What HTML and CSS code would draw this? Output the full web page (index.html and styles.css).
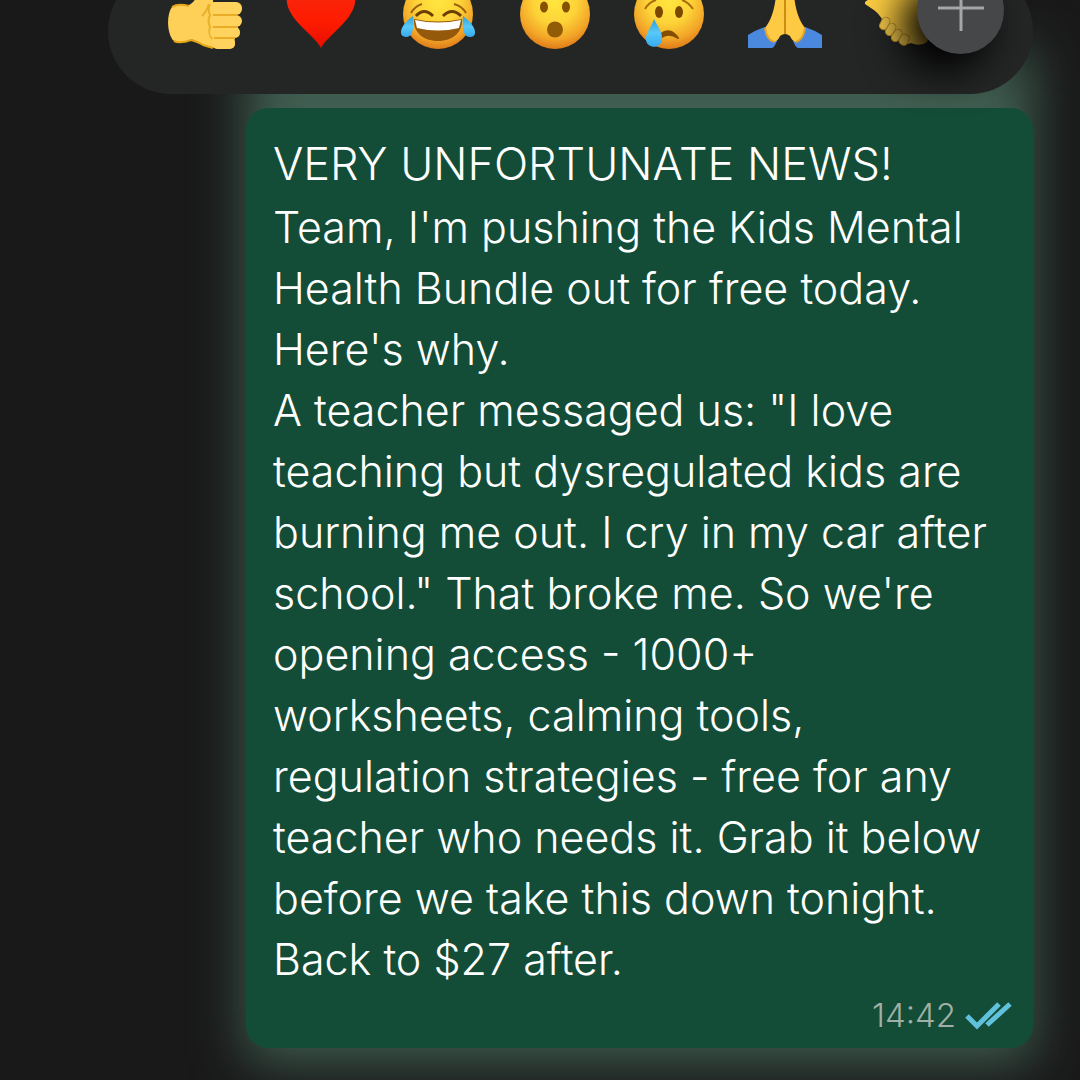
FILE: index.html
```html
<!DOCTYPE html>
<html lang="en">
<head>
<meta charset="utf-8">
<meta name="viewport" content="width=device-width, initial-scale=1">
<title>Message reactions</title>
<link rel="stylesheet" href="styles.css">
</head>
<body>
<svg class="defs" width="0" height="0" aria-hidden="true">
  <defs>
    <radialGradient id="face" cx="0.5" cy="0.32" r="0.7">
      <stop offset="0" stop-color="#ffe63e"/>
      <stop offset="0.45" stop-color="#fdd338"/>
      <stop offset="0.78" stop-color="#f2a427"/>
      <stop offset="1" stop-color="#dc7618"/>
    </radialGradient>
    <linearGradient id="tear" x1="0" y1="0" x2="0" y2="1">
      <stop offset="0" stop-color="#2f9fd8"/>
      <stop offset="0.5" stop-color="#58c9f8"/>
      <stop offset="1" stop-color="#36aaf0"/>
    </linearGradient>
    <linearGradient id="heart" x1="0" y1="0" x2="0" y2="1">
      <stop offset="0" stop-color="#f32a12"/>
      <stop offset="0.6" stop-color="#ff1c00"/>
      <stop offset="1" stop-color="#e60f00"/>
    </linearGradient>
  </defs>
</svg>
<main class="chat">
  <div class="reactions" role="group" aria-label="Reactions">
    <button class="reaction" type="button" aria-label="Thumbs up">
      <svg viewBox="0 0 76 76">
        <path d="M5 34C9 30 18 33 22 32C29 28 31 22 33 12C35 2 46 2 47 11C48 18 46 23 46 29L65 30L68 72C57 78 42 74 35 71C29 69 27 66 24 67C17 68 11 71 7 68C0 62-1 42 5 34Z" fill="#ffd058"/>
        <path d="M5 34Q11 30 22 33M7 68Q13 71 24 67Q29 68 36 72L46 75" fill="none" stroke="#e6a717" stroke-width="2"/>
        <path d="M42 31Q40 38 35 43M44 32Q40 36 43 42Q40 48 43 54Q41 60 45 66" fill="none" stroke="#e9b02c" stroke-width="2"/>
        <rect x="43" y="29" width="32" height="13" rx="6" fill="#ffd35d"/>
        <rect x="43" y="42" width="32" height="12" rx="6" fill="#ffd35d"/>
        <rect x="43" y="54" width="30" height="11" rx="5" fill="#ffd35d"/>
        <rect x="45" y="65" width="23" height="11" rx="5" fill="#ffd35d"/>
        <path d="M46 42H70M46 54H71M47 65H68" stroke="#e9ad27" stroke-width="2"/>
      </svg>
    </button>
    <button class="reaction" type="button" aria-label="Red heart">
      <svg viewBox="0 0 76 76">
        <path d="M38 75C35 69 28 63 19 54C8 43 2 33 4 21C7 5 29 2 38 18C47 2 69 5 72 21C74 33 68 43 57 54C48 63 41 69 38 75Z" fill="url(#heart)"/>
      </svg>
    </button>
    <button class="reaction" type="button" aria-label="Tears of joy">
      <svg viewBox="0 0 76 76">
        <circle cx="39" cy="41" r="35" fill="url(#face)"/>
        <path d="M12 40Q16 33 23 31M55 31Q63 33 67 40" fill="none" stroke="#98600b" stroke-width="2"/>
        <path d="M17 43Q25 34 34 43M44 43Q53 34 62 43" fill="none" stroke="#6b3e04" stroke-width="3"/>
        <path d="M15 46Q39 51 63 46C64 59 54 68 39 68C24 68 14 59 15 46Z" fill="#94590a"/>
        <path d="M16 47Q39 52 62 47L60 55Q39 60 18 55Z" fill="#fff"/>
        <path d="M14 43C15 54 14 64 7 64C-1 64 0 53 14 43ZM64 43C63 54 64 64 71 64C79 64 78 53 64 43Z" fill="url(#tear)"/>
      </svg>
    </button>
    <button class="reaction" type="button" aria-label="Surprised">
      <svg viewBox="0 0 76 76">
        <circle cx="40" cy="41" r="35" fill="url(#face)"/>
        <ellipse cx="29" cy="34" rx="4" ry="5.5" fill="#875200"/>
        <ellipse cx="51" cy="34" rx="4" ry="5.5" fill="#875200"/>
        <circle cx="40" cy="56.500" r="8" fill="#925b05"/>
      </svg>
    </button>
    <button class="reaction" type="button" aria-label="Crying">
      <svg viewBox="0 0 76 76">
        <circle cx="38" cy="41" r="35" fill="url(#face)"/>
        <path d="M14 36Q18 29 25 27M51 27Q57 29 62 36" fill="none" stroke="#a66c0e" stroke-width="2"/>
        <ellipse cx="28" cy="39" rx="4" ry="6" fill="#7c4800"/>
        <ellipse cx="48" cy="39" rx="4" ry="6" fill="#7c4800"/>
        <path d="M30 61Q39 54 47 65Q38 59 31 64Z" fill="#844e02" stroke="#844e02" stroke-width="2" stroke-linejoin="round"/>
        <path d="M23 46C27 54 32 60 31 67C30 76 16 76 15 67C14 61 20 55 23 46Z" fill="url(#tear)"/>
      </svg>
    </button>
    <button class="reaction" type="button" aria-label="Folded hands">
      <svg viewBox="0 0 76 76">
        <path d="M1 62Q9 57 18 54L30 68Q27 75 25 75H1ZM75 62Q67 57 58 54L46 68Q49 75 51 75H75Z" fill="#4b89df"/>
        <path d="M18 55C24 47 27 39 29 23Q31 7 38 1Q45 7 47 23C49 39 52 47 58 55Q57 67 49 69Q45 68 43 63Q38 59 33 63Q31 68 27 69Q19 67 18 55Z" fill="#ffca43"/>
        <path d="M38 5V61" stroke="#cf8c12" stroke-width="2"/>
        <path d="M18 55Q20 67 27 69M58 55Q56 67 49 69" fill="none" stroke="#e7a325" stroke-width="2"/>
      </svg>
    </button>
    <button class="reaction" type="button" aria-label="Handshake">
      <svg viewBox="0 0 76 76">
        <path d="M2 29L22 14L57 18L75 35L64 69Q57 74 48 70Q41 73 38 68Q31 67 30 61Q25 61 24 56Q17 53 19 46C14 38 8 35 2 31Z" fill="#ffcf42"/>
        <g fill="#fad04d" stroke="#c9932a" stroke-width="1">
          <rect x="18" y="44" width="8" height="13" rx="4" transform="rotate(28 22 50)"/>
          <rect x="24" y="50" width="8" height="13" rx="4" transform="rotate(30 28 56)"/>
          <rect x="30" y="56" width="8" height="13" rx="4" transform="rotate(34 34 62)"/>
          <rect x="37" y="61" width="9" height="11" rx="4" transform="rotate(28 41 66)"/>
        </g>
      </svg>
    </button>
    <button class="more" type="button" aria-label="More reactions">
      <svg viewBox="0 0 46 46"><path d="M0 23H46M23 0V46" stroke="#a6a6a8" stroke-width="3"/></svg>
    </button>
  </div>
  <article class="message">
    <h1 class="headline">VERY UNFORTUNATE NEWS!</h1>
    <p class="text">Team, I'm pushing the Kids Mental Health Bundle out for free today. Here's why.</p>
    <p class="text">A teacher messaged us: "I love teaching but dysregulated kids are burning me out. I cry in my car after school." That broke me. So we're opening access - 1000+ worksheets, calming tools, regulation strategies - free for any teacher who needs it. Grab it below before we take this down tonight. Back to $27 after.</p>
    <footer class="status">
      <time datetime="14:42">14:42</time>
      <svg class="read" viewBox="0 0 48 30" role="img" aria-label="Read"><path d="M3 16L13 26L35 4M23 25L46 4" fill="none" stroke="#5fc1dc" stroke-width="5"/></svg>
    </footer>
  </article>
</main>
</body>
</html>
```
FILE: styles.css
```css
* {
  box-sizing: border-box;
}

body {
  margin: 0;
  min-height: 100vh;
  overflow-x: hidden;
  background: #191919;
  color: #fff;
  font-family: Inter, "Liberation Sans", sans-serif;
  font-weight: 300;
}

.defs {
  position: absolute;
}

.chat {
  display: flex;
  flex-direction: column;
  gap: 14px;
  padding: 0 47px 32px 108px;
  overflow: hidden;
}

.reactions {
  position: relative;
  z-index: 1;
  display: flex;
  align-items: flex-end;
  gap: 40px;
  height: 126px;
  margin-top: -32px;
  padding: 0 59px 45px;
  border-radius: 63px;
  background: #242625;
}

.reaction,
.more {
  flex: none;
  padding: 0;
  border: 0;
  background: none;
}

.reaction svg {
  display: block;
  width: 76px;
  height: 76px;
}

.more {
  position: absolute;
  right: 29px;
  bottom: 40px;
  display: grid;
  place-items: center;
  width: 87px;
  height: 87px;
  padding-bottom: 5px;
  border-radius: 50%;
  background: #464749;
  box-shadow: -16px 16px 40px 2px #000;
}

.more svg {
  width: 46px;
  height: 46px;
}

.message {
  position: relative;
  margin-left: 138px;
  padding: 23px 27px 13px;
  border-radius: 22px;
  background: #144d37;
}

.message::before {
  content: "";
  position: absolute;
  inset: -58px 0 -14px;
  z-index: -1;
  background: #405e51;
  filter: blur(26px);
}

.headline {
  margin: 0;
  font-size: 45px;
  font-weight: 300;
  line-height: 66px;
}

.text {
  margin: 0;
  font-size: 43px;
  line-height: 61px;
}

.status {
  display: flex;
  justify-content: flex-end;
  align-items: center;
  gap: 8px;
  margin: 5px -6px 0 0;
  color: #a1b0a6;
  font-size: 33px;
  line-height: 40px;
}

.read {
  width: 48px;
  height: 30px;
}
```
